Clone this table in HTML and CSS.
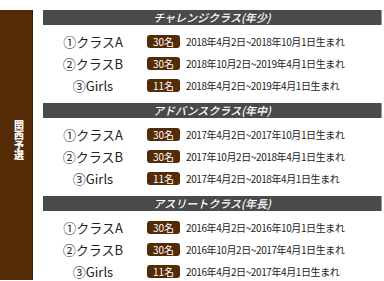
FILE: index.html
```html
<!DOCTYPE html>
<html lang="ja">
<head>
<meta charset="utf-8">
<link rel="stylesheet" href="styles.css">
</head>
<body>
<div class="wrap">
  <aside class="region"><span class="region-text">関西予選</span></aside>
  <main class="sections">
    <section class="sec">
      <h2 class="sec-head">チャレンジクラス(年少)</h2>
      <div class="row"><span class="label">①クラスA</span><span class="badge">30名</span><span class="date">2018年4月2日~2018年10月1日生まれ</span></div>
      <div class="row"><span class="label">②クラスB</span><span class="badge">30名</span><span class="date">2018年10月2日~2019年4月1日生まれ</span></div>
      <div class="row"><span class="label">③Girls</span><span class="badge">11名</span><span class="date">2018年4月2日~2019年4月1日生まれ</span></div>
    </section>
    <section class="sec">
      <h2 class="sec-head">アドバンスクラス(年中)</h2>
      <div class="row"><span class="label">①クラスA</span><span class="badge">30名</span><span class="date">2017年4月2日~2017年10月1日生まれ</span></div>
      <div class="row"><span class="label">②クラスB</span><span class="badge">30名</span><span class="date">2017年10月2日~2018年4月1日生まれ</span></div>
      <div class="row"><span class="label">③Girls</span><span class="badge">11名</span><span class="date">2017年4月2日~2018年4月1日生まれ</span></div>
    </section>
    <section class="sec">
      <h2 class="sec-head">アスリートクラス(年長)</h2>
      <div class="row"><span class="label">①クラスA</span><span class="badge">30名</span><span class="date">2016年4月2日~2016年10月1日生まれ</span></div>
      <div class="row"><span class="label">②クラスB</span><span class="badge">30名</span><span class="date">2016年10月2日~2017年4月1日生まれ</span></div>
      <div class="row"><span class="label">③Girls</span><span class="badge">11名</span><span class="date">2016年4月2日~2017年4月1日生まれ</span></div>
    </section>
  </main>
</div>
</body>
</html>
```
FILE: styles.css
```css
* { box-sizing: border-box; }
html, body { margin: 0; padding: 0; background: #fff; }
body {
  font-family: "Noto Sans CJK JP", "Noto Sans", sans-serif;
  color: #222;
  width: 384px;
  height: 281px;
  overflow: hidden;
}
.wrap {
  display: flex;
  padding-top: 10px;
  gap: 10px;
}
.region {
  width: 33px;
  height: 270px;
  background: #552b05;
  border-right: 1px solid #3d1e02;
  display: flex;
  align-items: center;
  justify-content: center;
}
.region-text {
  writing-mode: vertical-rl;
  color: #fff;
  font-weight: 900;
  font-size: 10px;
  line-height: 10px;
  margin-left: 5px;
  margin-top: -10px;
}
.sections {
  width: 339px;
  display: flex;
  flex-direction: column;
  gap: 7px;
}
.sec {
  display: flex;
  flex-direction: column;
}
.sec-head {
  margin: 0 0 5px 0;
  height: 15px;
  background: #4a4a4a;
  border-right: 1px solid #999;
  color: #fff;
  font-size: 11px;
  font-weight: 500;
  font-style: italic;
  line-height: 15px;
  text-align: center;
}
.row {
  display: grid;
  grid-template-columns: 100px 32px auto;
  column-gap: 5px;
  align-items: center;
  height: 22px;
}
.label {
  text-align: center;
  font-size: 13px;
  color: #222;
  white-space: nowrap;
}
.badge {
  margin-left: -1px;
  height: 13px;
  background: #552b05;
  border-radius: 3px;
  color: #fff;
  font-size: 10px;
  line-height: 13px;
  text-align: center;
}
.date {
  margin-left: 1px;
  font-size: 10px;
  letter-spacing: -0.4px;
  color: #222;
  white-space: nowrap;
}
```
